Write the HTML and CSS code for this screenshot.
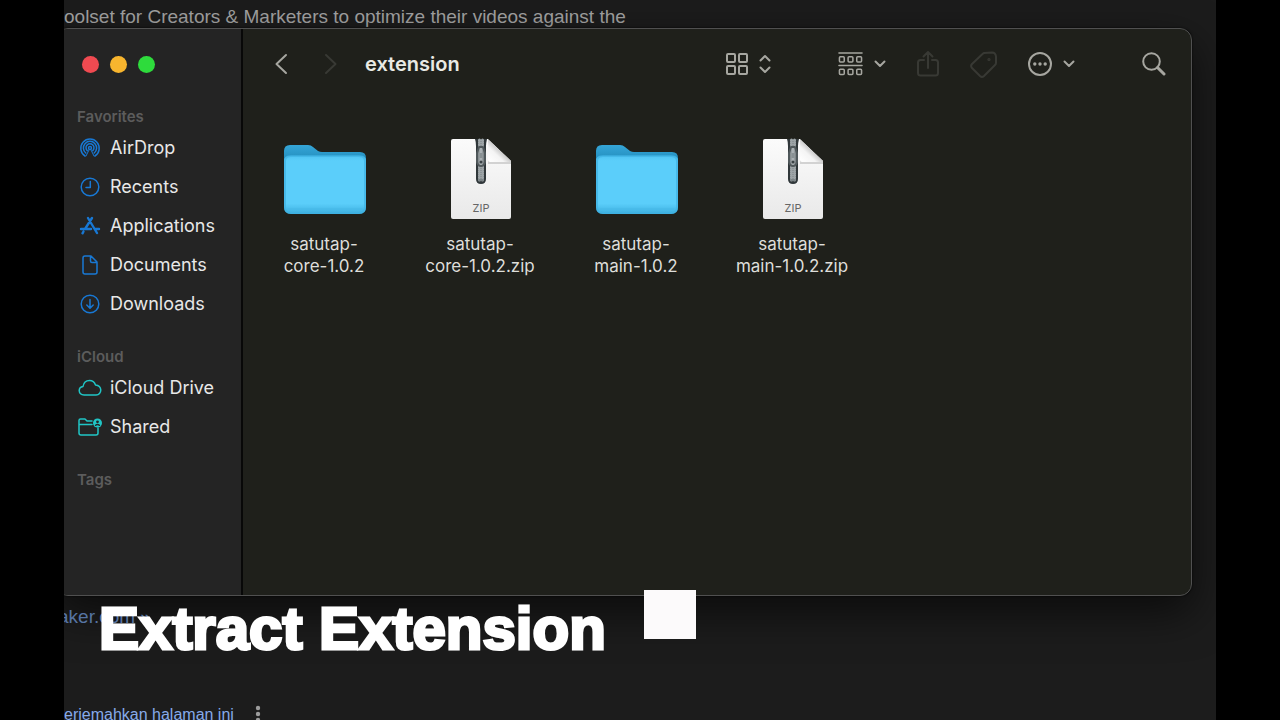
FILE: index.html
```
<!DOCTYPE html>
<html lang="en">
<head>
  <meta charset="UTF-8">
  <meta name="viewport" content="width=device-width, initial-scale=1.0">
  <title>Extract Extension</title>
  <link rel="stylesheet" href="styles.css">
</head>
<body>
  <!-- shared icon shapes -->
  <svg class="defs" aria-hidden="true">
    <defs>
      <linearGradient id="folderBack" x1="0" y1="0" x2="0" y2="1">
        <stop offset="0" stop-color="#35a6d8"/>
        <stop offset=".4" stop-color="#2590c0"/>
        <stop offset="1" stop-color="#2187b4"/>
      </linearGradient>
      <linearGradient id="folderFront" x1="0" y1="0" x2="0" y2="1">
        <stop offset="0" stop-color="#50c4f2"/>
        <stop offset=".08" stop-color="#5bcefa"/>
        <stop offset=".82" stop-color="#5bcefa"/>
        <stop offset="1" stop-color="#3cafdf"/>
      </linearGradient>
      <linearGradient id="paper" x1="0" y1="0" x2="0" y2="1">
        <stop offset="0" stop-color="#fbfbfb"/>
        <stop offset="1" stop-color="#e9e9e9"/>
      </linearGradient>
      <linearGradient id="fold" x1="0" y1="1" x2="1" y2="0">
        <stop offset="0" stop-color="#ffffff"/>
        <stop offset=".35" stop-color="#f4f4f4"/>
        <stop offset=".55" stop-color="#c4c4c4"/>
      </linearGradient>
      <linearGradient id="metal" x1="0" y1="0" x2="1" y2="0">
        <stop offset="0" stop-color="#6d7578"/>
        <stop offset=".5" stop-color="#b4babd"/>
        <stop offset="1" stop-color="#60686b"/>
      </linearGradient>
      <symbol id="folder" viewBox="0 0 84 84">
        <path d="M2 14q0-6 6-6h18q3 0 5 2l5 4q2 1 4 1h38q6 0 6 6v20H2z" fill="url(#folderBack)"/>
        <path d="M2 24q0-5 6-5h70q6 0 6 5v46q0 7-7 7H9q-7 0-7-7z" fill="url(#folderFront)"/>
        <path d="M3 24q0-5 6-5h68q6 0 6 5v46q0 6-6 6H9q-6 0-6-6z" fill="none" stroke="#3eb2e2" stroke-width="2" opacity=".7"/>
        <path d="M6 72h74" stroke="#46b8e7" stroke-width="1"/>
      </symbol>
      <symbol id="zip" viewBox="0 0 84 84">
        <path d="M15 2h35l23 22v56q0 2-2 2H15q-2 0-2-2V4q0-2 2-2z" fill="url(#paper)"/>
        <path d="M50 3l23 21v3H50z" fill="#d2d2d2"/>
        <path d="M50 3l23 21v1H52q-2 0-2-2z" fill="url(#fold)"/>
        <path d="M37 2h12q-1 4-1 7v33q0 5-5 5t-5-5V9q0-4-1-7z" fill="#30373a"/>
        <path d="M41.500 3v7M41.500 24v20M44.500 3v7M44.500 24v20" stroke="#9da4a7" stroke-width="3" stroke-dasharray="1 1"/>
        <path d="M41 10h4l2 6v9q-1 4-4 4t-4-4v-9z" fill="url(#metal)" stroke="#50585b"/>
        <path d="M41.500 16h3v5h-3z" fill="#899194"/>
        <circle cx="43" cy="25" r="1.500" fill="#3a4245"/>
        <path d="M41 43h4" stroke="#7b8386" stroke-width="2"/>
        <text x="43" y="75" text-anchor="middle" class="zip-text">ZIP</text>
      </symbol>
      <symbol id="chevron" viewBox="0 0 12 8">
        <path d="M1.500 1.500L6 6l4.500-4.500"/>
      </symbol>
    </defs>
  </svg>

  <div class="stage">
    <p class="snippet">oolset for Creators &amp; Marketers to optimize their videos against the</p>

    <main class="finder">
      <aside class="sidebar">
        <div class="lights">
          <button class="light close" aria-label="Close"></button>
          <button class="light minimize" aria-label="Minimize"></button>
          <button class="light expand" aria-label="Zoom"></button>
        </div>
        <nav>
          <h2>Favorites</h2>
          <a href="#"><svg viewBox="0 0 24 24"><path d="M7 20a9.200 9.200 0 1 1 10 0M7.800 17a6.600 6.600 0 1 1 8.400 0M9.300 14.700a4 4 0 1 1 5.400 0"/><circle cx="12" cy="12" r="1.500"/><path d="M11 14l-3 6M13 14l3 6" stroke-width="1"/></svg>AirDrop</a>
          <a href="#"><svg viewBox="0 0 24 24"><circle cx="12" cy="12" r="8.800"/><path d="M12.300 6.500v6H8"/></svg>Recents</a>
          <a href="#"><svg viewBox="0 0 24 24"><path d="M10 4l9 15M14 4L7 15M5.500 17.500l-1 1.800M3 15h10M17 15h4" stroke-width="2.400"/></svg>Applications</a>
          <a href="#"><svg viewBox="0 0 24 24"><path d="M7 3h6l6 6v10q0 2-2 2H7q-2 0-2-2V5q0-2 2-2zM12.500 3v5q0 1.500 1.500 1.500h5"/></svg>Documents</a>
          <a href="#"><svg viewBox="0 0 24 24"><circle cx="12" cy="12" r="8.800"/><path d="M12 7.500v8.500M8.800 13l3.200 3.200 3.200-3.200"/></svg>Downloads</a>
          <h2>iCloud</h2>
          <a href="#" class="cloud"><svg viewBox="0 0 24 24"><path d="M6 19q-4.500-.2-4.800-4.200Q1.200 11 5 10.500 6 4.500 11.500 4.500q4.500 0 6 4.500 5 .5 5.300 5-.2 4.600-4.800 5z"/></svg>iCloud Drive</a>
          <a href="#" class="cloud"><svg viewBox="0 0 24 24"><path d="M14 6H9L7 4H2.500Q1 4 1 5.500V18q0 2 2 2h15q2 0 2-2v-5M1 9.500h13"/><circle cx="19.500" cy="8" r="4.500" fill="currentColor" stroke="none"/><circle cx="19.500" cy="6.800" r="1.400" fill="#242424" stroke="none"/><path d="M17.600 10.300q1.900-1.600 3.800 0" stroke="#242424"/></svg>Shared</a>
          <h2>Tags</h2>
        </nav>
      </aside>

      <section class="content">
        <header class="toolbar">
          <div class="history">
            <button aria-label="Back"><svg width="14" height="22" viewBox="0 0 14 22"><path d="M12 2L2.500 11l9.500 9"/></svg></button>
            <button class="off" aria-label="Forward"><svg width="14" height="22" viewBox="0 0 14 22"><path d="M2 2l9.500 9L2 20"/></svg></button>
          </div>
          <h1>extension</h1>
          <div class="tools">
            <button aria-label="View"><svg width="22" height="22" viewBox="0 0 22 22"><rect x="1" y="1" width="8" height="8" rx="1"/><rect x="13" y="1" width="8" height="8" rx="1"/><rect x="1" y="13" width="8" height="8" rx="1"/><rect x="13" y="13" width="8" height="8" rx="1"/></svg><svg width="12" height="20" viewBox="0 0 12 20"><path d="M1.500 6.500L6 2l4.500 4.500M1.500 13.500L6 18l4.500-4.500"/></svg></button>
            <div class="actions">
              <button aria-label="Group"><svg width="25" height="26" viewBox="0 0 26 26"><path d="M1 1.500h24M1 14.500h24" stroke-width="1.600"/><g stroke-width="1.600"><rect x="1.500" y="5.500" width="5" height="5.500" rx="1"/><rect x="10.500" y="5.500" width="5" height="5.500" rx="1"/><rect x="19.500" y="5.500" width="5" height="5.500" rx="1"/><rect x="1.500" y="18.500" width="5" height="5.500" rx="1"/><rect x="10.500" y="18.500" width="5" height="5.500" rx="1"/><rect x="19.500" y="18.500" width="5" height="5.500" rx="1"/></g></svg><svg width="12" height="8"><use href="#chevron"/></svg></button>
              <button class="off" aria-label="Share"><svg width="22" height="28" viewBox="0 0 22 28"><path d="M7 10H3.500Q1 10 1 12.500V23q0 2.500 2.500 2.500h15Q21 25.500 21 23V12.500Q21 10 18.500 10H15M11 18V2.500M6.500 6.500L11 2l4.500 4.500"/></svg></button>
              <button class="off" aria-label="Tags"><svg width="27" height="27" viewBox="0 0 27 27"><path d="M14 2l8-.5q3.500 0 4 4V12q0 1-1 2L14 25q-2 1.800-4 0l-8-8q-1.800-2 0-4L12.500 3q.8-.8 1.500-1z"/><circle cx="19" cy="8.500" r=".6"/></svg></button>
              <button aria-label="More"><svg width="24" height="24" viewBox="0 0 24 24"><circle cx="12" cy="12" r="11"/><g class="dots"><circle cx="6.800" cy="12" r="1.700"/><circle cx="12" cy="12" r="1.700"/><circle cx="17.200" cy="12" r="1.700"/></g></svg><svg width="12" height="8"><use href="#chevron"/></svg></button>
            </div>
            <button aria-label="Search"><svg width="24" height="24" viewBox="0 0 24 24"><circle cx="9.500" cy="9.500" r="8.300"/><path d="M15.500 15.500l6.500 6.500" stroke-width="3"/></svg></button>
          </div>
        </header>

        <ul class="files">
          <li><svg><use href="#folder"/></svg><span>satutap-<br>core-1.0.2</span></li>
          <li><svg><use href="#zip"/></svg><span>satutap-<br>core-1.0.2.zip</span></li>
          <li><svg><use href="#folder"/></svg><span>satutap-<br>main-1.0.2</span></li>
          <li><svg><use href="#zip"/></svg><span>satutap-<br>main-1.0.2.zip</span></li>
        </ul>
      </section>
    </main>

    <footer class="results">
      <a href="#" class="site">aker.com »</a>
      <div class="translate">
        <a href="#">erjemahkan halaman ini</a>
        <button aria-label="About this result"><svg width="6" height="24" viewBox="0 0 6 24"><circle cx="3" cy="5" r="2.200"/><circle cx="3" cy="11" r="2.200"/><circle cx="3" cy="17" r="2.200"/></svg></button>
      </div>
    </footer>

    <div class="caption">
      <strong>Extract Extension</strong>
      <span class="block"></span>
    </div>
  </div>
</body>
</html>
```
FILE: styles.css
```
* {
    box-sizing: border-box;
}

body {
    margin: 0;
    padding: 0 5%;
    background-color: #000;
    font-family: Inter, "Liberation Sans", sans-serif;
}

h1, h2, p, ul {
    margin: 0;
    padding: 0;
}

button {
    padding: 0;
    border: none;
    background: none;
    color: inherit;
    display: flex;
    align-items: center;
}

a {
    text-decoration: none;
}

svg {
    fill: none;
    stroke: currentColor;
    stroke-width: 2;
    stroke-linecap: round;
    stroke-linejoin: round;
    flex-shrink: 0;
}

.defs {
    position: absolute;
    width: 0;
    height: 0;
}

.stage {
    position: relative;
    display: flex;
    flex-direction: column;
    height: 100vh;
    overflow: hidden;
    background-color: #1c1c1c;
}

.snippet {
    padding-top: 5px;
    height: 28px;
    font: 19px/24px "Liberation Sans", Arial, sans-serif;
    color: #a3a3a3;
    white-space: nowrap;
}

/* Finder window */
.finder {
    flex: 1;
    display: flex;
    min-height: 0;
    margin: 0 24px 0 -8px;
    border: 1px solid #505050;
    border-radius: 12px;
    background-color: #1f201b;
    box-shadow: 0 16px 44px rgba(0,0,0,0.6), 0 0 2px #000;
    overflow: hidden;
}

.sidebar {
    width: 186px;
    flex-shrink: 0;
    padding: 27px 0 0 20px;
    background-color: #242424;
    border-right: 2px solid #080808;
}

.lights {
    display: flex;
    gap: 11px;
    padding-left: 5px;
    margin-bottom: 33px;
}

.light {
    width: 17px;
    height: 17px;
    border-radius: 50%;
}

.close {
    background-color: #f04a51;
}

.minimize {
    background-color: #f8b52e;
}

.expand {
    background-color: #2edb3c;
}

.sidebar h2 {
    font-size: 15px;
    line-height: 22px;
    font-weight: 600;
    color: #5c5c5c;
}

.sidebar a + h2 {
    margin-top: 23px;
}

.sidebar a {
    display: flex;
    align-items: center;
    gap: 8px;
    height: 39px;
    padding-left: 1px;
    font-size: 18px;
    color: #e8e8e8;
    white-space: nowrap;
}

.sidebar svg {
    width: 24px;
    height: 24px;
    color: #1878d4;
    stroke-width: 1.5;
}

.sidebar .cloud svg {
    color: #20c5c5;
}

.content {
    flex: 1;
    min-width: 0;
}

.toolbar {
    display: flex;
    align-items: center;
    height: 70px;
    padding: 0 25px 0 31px;
    color: #a6a6a0;
}

.toolbar .off {
    color: #383934;
}

.history {
    display: flex;
    gap: 36px;
}

.toolbar h1 {
    margin-left: 27px;
    font-size: 20px;
    font-weight: 600;
    color: #e9eae4;
}

.tools {
    display: flex;
    align-items: center;
    gap: 67px;
    margin-left: auto;
}

.tools button {
    gap: 11px;
}

.actions {
    display: flex;
    align-items: center;
    gap: 31px;
}

.dots {
    fill: currentColor;
    stroke: none;
}

.files {
    display: grid;
    grid-template-columns: repeat(auto-fill, 156px);
    padding: 38px 3px;
    list-style: none;
}

.files li {
    display: flex;
    flex-direction: column;
    align-items: center;
    gap: 12px;
    font-size: 17px;
    line-height: 22px;
    text-align: center;
    color: #dededa;
}

.files svg {
    width: 84px;
    height: 84px;
    stroke: none;
}

.zip-text {
    font-size: 11px;
    fill: #666;
    stroke: none;
}

/* Page behind the window */
.results {
    height: 124px;
    padding-top: 9px;
    font-family: "Liberation Sans", Arial, sans-serif;
}

.site {
    display: block;
    margin-left: -6px;
    font-size: 19px;
    line-height: 24px;
    color: #5674a3;
}

.translate {
    display: flex;
    gap: 21px;
    margin-top: 74px;
    font-size: 16px;
    line-height: 24px;
}

.translate a {
    color: #86aaea;
}

.translate button {
    color: #9c9c9c;
}

.translate svg {
    fill: currentColor;
    stroke: none;
}

/* Title laid over the recording */
.caption {
    position: absolute;
    left: 35px;
    bottom: 53px;
    display: flex;
    gap: 38px;
    font-family: "Liberation Sans", Arial, sans-serif;
    font-size: 60px;
    line-height: 77px;
    color: #fff;
    white-space: nowrap;
}

.caption strong {
    font-weight: 700;
    -webkit-text-stroke: 3px #fff;
}

.block {
    width: 52px;
    height: 49px;
    background-color: #fcfafb;
}
```
